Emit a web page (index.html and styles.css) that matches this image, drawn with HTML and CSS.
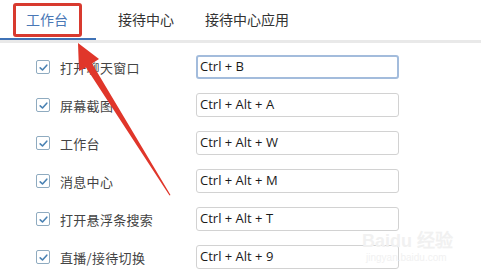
FILE: index.html
```html
<!DOCTYPE html>
<html lang="zh-CN">
<head>
  <meta charset="UTF-8">
  <meta name="viewport" content="width=device-width, initial-scale=1.0">
  <title>快捷键设置</title>
  <link rel="stylesheet" href="styles.css">
</head>
<body>
  <nav class="tabs">
    <div class="tab tab-active">工作台</div>
    <div class="tab tab-second">接待中心</div>
    <div class="tab tab-third">接待中心应用</div>
  </nav>

  <ul class="hotkeys">
    <li class="hotkey">
      <span class="check"><svg viewBox="0 0 13 13" width="13" height="13"><path d="M3.2 6.8 L5.5 9 L9.8 4.2" /></svg></span>
      <span class="label">打开聊天窗口</span>
      <div class="field field-focus">Ctrl + B</div>
    </li>
    <li class="hotkey">
      <span class="check"><svg viewBox="0 0 13 13" width="13" height="13"><path d="M3.2 6.8 L5.5 9 L9.8 4.2" /></svg></span>
      <span class="label">屏幕截图</span>
      <div class="field">Ctrl + Alt + A</div>
    </li>
    <li class="hotkey">
      <span class="check"><svg viewBox="0 0 13 13" width="13" height="13"><path d="M3.2 6.8 L5.5 9 L9.8 4.2" /></svg></span>
      <span class="label">工作台</span>
      <div class="field">Ctrl + Alt + W</div>
    </li>
    <li class="hotkey">
      <span class="check"><svg viewBox="0 0 13 13" width="13" height="13"><path d="M3.2 6.8 L5.5 9 L9.8 4.2" /></svg></span>
      <span class="label">消息中心</span>
      <div class="field">Ctrl + Alt + M</div>
    </li>
    <li class="hotkey">
      <span class="check"><svg viewBox="0 0 13 13" width="13" height="13"><path d="M3.2 6.8 L5.5 9 L9.8 4.2" /></svg></span>
      <span class="label">打开悬浮条搜索</span>
      <div class="field">Ctrl + Alt + T</div>
    </li>
    <li class="hotkey">
      <span class="check"><svg viewBox="0 0 13 13" width="13" height="13"><path d="M3.2 6.8 L5.5 9 L9.8 4.2" /></svg></span>
      <span class="label">直播/接待切换</span>
      <div class="field">Ctrl + Alt + 9</div>
    </li>
  </ul>

  <!-- 标注：红框和箭头 -->
  <div class="mark-box"></div>
  <svg class="mark-arrow" width="481" height="276" viewBox="0 0 481 276">
    <polygon points="78,43 99,59 92,63.5 170.5,195 169.5,195.5 86,67.5 79,71" />
  </svg>

  <div class="watermark">
    <span class="wm-logo">Bai<span class="wm-paw">du</span> 经验</span>
    <span class="wm-url">jingyan.baidu.com</span>
  </div>
</body>
</html>
```

FILE: styles.css
```css
body {
  margin: 0;
  width: 481px;
  height: 276px;
  overflow: hidden;
  background: #fff;
  font-family: "Noto Sans CJK SC", "Noto Sans", sans-serif;
  color: #222;
  position: relative;
}

.tabs {
  display: flex;
  height: 40px;
  border-bottom: 3px solid #e9e9e9;
}

.tab {
  font-size: 14px;
  line-height: 38px;
  color: #333;
}

.tab-active {
  width: 70px;
  padding-left: 26px;
  color: #4a78b6;
  border-bottom: 2px solid #3f72b6;
}

.tab-second {
  margin-left: 22px;
}

.tab-third {
  margin-left: 31px;
}

.hotkeys {
  list-style: none;
  margin: 0;
  padding: 5px 0 0 36px;
}

.hotkey {
  display: flex;
  align-items: center;
  height: 38px;
}

.check {
  width: 12px;
  height: 12px;
  border: 1px solid #8fabc0;
  border-radius: 2px;
  position: relative;
}

.check svg {
  position: absolute;
  left: -0.5px;
  top: -0.5px;
}

.check path {
  fill: none;
  stroke: #4a82b3;
  stroke-width: 1.6;
  stroke-linecap: round;
  stroke-linejoin: round;
}

.label {
  width: 136px;
  margin-left: 10px;
  font-size: 13px;
  color: #444;
  letter-spacing: 0.3px;
}

.field {
  box-sizing: border-box;
  width: 203px;
  height: 24px;
  padding-left: 3px;
  border: 1px solid #d2d2d2;
  border-radius: 3px;
  font-family: "Open Sans", "Noto Sans", sans-serif;
  font-size: 13px;
  line-height: 21px;
  color: #1a1a1a;
}

.field-focus {
  border: 2px solid #a3bcdc;
  padding-left: 2px;
  line-height: 19px;
}

.mark-box {
  position: absolute;
  left: 13px;
  top: 3px;
  width: 63px;
  height: 28px;
  border: 3px solid #d83a2f;
  border-radius: 3px;
}

.mark-arrow {
  position: absolute;
  left: 0;
  top: 0;
}

.mark-arrow polygon {
  fill: #e0362a;
}

.watermark {
  position: absolute;
  left: 362px;
  top: 230px;
  display: flex;
  flex-direction: column;
  color: #f1f1f1;
  font-family: "Liberation Sans", sans-serif;
}

.wm-logo {
  font-size: 18px;
  font-weight: bold;
  line-height: 22px;
}

.wm-url {
  font-size: 10px;
  line-height: 12px;
  margin-left: 4px;
}
```
